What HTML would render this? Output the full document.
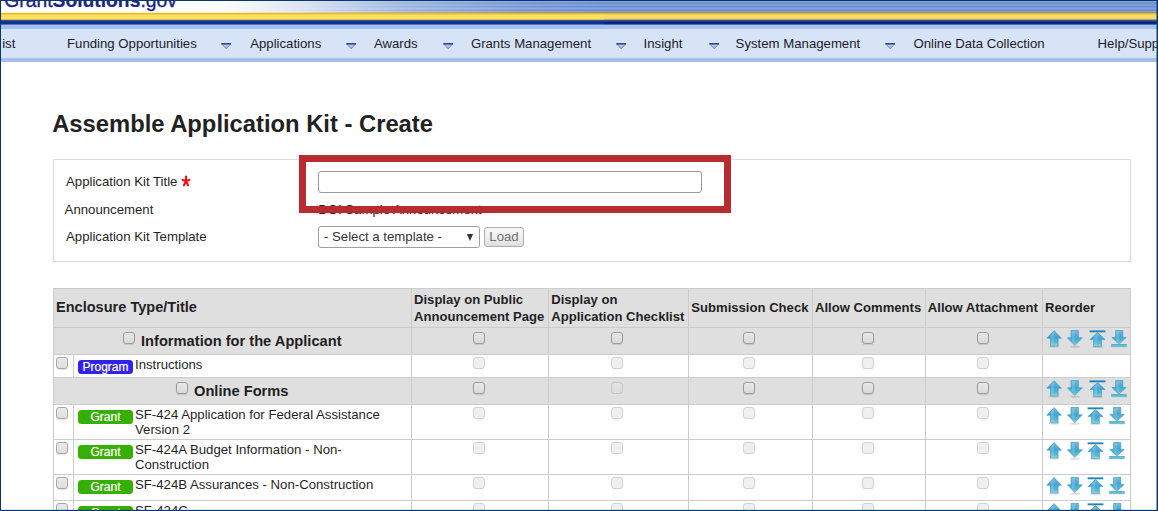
<!DOCTYPE html>
<html lang="en">
<head>
<meta charset="utf-8">
<title>Assemble Application Kit - Create</title>
<style>
*{box-sizing:border-box;margin:0;padding:0}
html,body{width:1158px;height:511px;overflow:hidden;background:#fff}
body{font-family:"Liberation Sans",Arial,sans-serif;font-size:13.2px;color:#1f1f24;position:relative}
.abs{position:absolute}
#page{position:absolute;left:0;top:0;width:1158px;height:511px;overflow:hidden;background:#fff}
/* header */
#hdr{position:absolute;left:0;top:0;width:1158px;height:29px;
 background:linear-gradient(to bottom,#063869 0px,#063869 1px,#7f9fde 1px,#7f9fde 2px,#7494d3 2px,#7494d3 3px,#6f8fce 3px,#6f8fce 4px,#7c9cdb 4px,#7c9cdb 5px,#7e9edd 5px,#7e9edd 6px,#6d8dcc 6px,#6d8dcc 7px,#7998d7 7px,#7998d7 8px,#86a4e2 8px,#86a4e2 9px,#7696d5 9px,#7696d5 10px,#6888c8 10px,#6888c8 11px,#8fa6cb 11px,#8fa6cb 12px,#93926a 12px,#93926a 13px,#d6b84c 13px,#d6b84c 14px,#f0cc50 14px,#f0cc50 15px,#fddc5c 15px,#fddc5c 16px,#fddc5c 16px,#fddc5c 17px,#f2d67e 17px,#f2d67e 18px,#f2d67e 18px,#f2d67e 19px,#b6a666 19px,#b6a666 20px,#46566f 20px,#46566f 21px,#12398a 21px,#12398a 22px,#0a2682 22px,#0a2682 23px,#0a2682 23px,#0a2682 24px,#4a6cc8 24px,#4a6cc8 25px,#a8c2ea 25px,#a8c2ea 26px,#a8c2ea 26px,#a8c2ea 27px,#a8c2ea 27px,#a8c2ea 28px,#a8c2ea 28px,#a8c2ea 29px)}
#hdrL{position:absolute;left:0;top:0;width:604px;height:29px;
 background:linear-gradient(to bottom,
 #063869 0,#063869 1px,
 rgba(255,255,255,0) 1px,rgba(255,255,255,0) 13px,
 #e6ba3a 13px,#e6ba3a 14px,#f2cc48 14px,#f2cc48 15px,
 #fee264 15px,#fee264 19px,#d6b650 19px,#d6b650 20px,
 #4e5a62 20px,#4e5a62 21px,#0c3498 21px,#0c3498 24px,
 #4f74d0 24px,#4f74d0 25px,#a5c0ea 25px,#a5c0ea 29px)}
#hdrW{position:absolute;left:1px;top:1px;width:603px;height:11px;
 background:linear-gradient(to right,#fff 0,#fff 215px,rgba(255,255,255,.75) 300px,rgba(255,255,255,.35) 400px,rgba(255,255,255,.08) 520px,rgba(255,255,255,0) 603px)}
#hdrY{position:absolute;left:1px;top:12px;width:603px;height:1px;background:linear-gradient(to right,#fff0b0 0,#fff0b0 215px,rgba(255,240,176,.75) 300px,rgba(255,240,176,.35) 400px,rgba(255,240,176,.08) 520px,rgba(255,240,176,0) 603px)}
#logo{position:absolute;left:4.3px;top:-9.7px;font-size:19.3px;line-height:22px;color:#1c2587;white-space:nowrap;letter-spacing:0}
#logo{-webkit-text-stroke:.35px #1c2587}
#logo b{font-weight:bold;-webkit-text-stroke:.2px #1c2587}
/* nav */
#nav{position:absolute;left:0;top:29px;width:1158px;height:33px;background:#d7e3f6;border-bottom:4px solid #a6c0ea}
.ni{position:absolute;top:36.1px;line-height:16px;font-size:13.2px;white-space:nowrap;color:#1c1c2c}
.na{position:absolute;top:42.6px;width:10.4px;height:6.4px}
/* frame */
#fT{position:absolute;left:0;top:0;width:1158px;height:1px;background:#063869}
#fL{position:absolute;left:0;top:0;width:1px;height:511px;background:#07366b}
#fR{position:absolute;left:1156px;top:0;width:2px;height:511px;background:linear-gradient(to right,rgba(7,54,107,.45) 0,rgba(7,54,107,.45) 1px,#07366b 1px,#07366b 2px)}
#fB{position:absolute;left:0;top:509px;width:1158px;height:2px;background:linear-gradient(to bottom,rgba(7,54,107,.12) 0,rgba(7,54,107,.12) 1px,#07366b 1px,#07366b 2px)}
h1{position:absolute;left:52.2px;top:110.2px;font-size:23.78px;line-height:28px;font-weight:bold;color:#222;white-space:nowrap}
#panel{position:absolute;left:53px;top:159px;width:1078px;height:103px;border:1px solid #ddd}
.lbl{position:absolute;line-height:16px;white-space:nowrap}
#red{position:absolute;left:299px;top:155px;width:432px;height:58px;border:7px solid #b72b31}
#inp{position:absolute;left:318px;top:171px;width:384px;height:22px;border:1px solid #9a9a9a;border-radius:3px;background:#fff}
#sel{position:absolute;left:318px;top:226px;width:162px;height:22px;border:1px solid #a0a0a0;border-radius:3px;background:#fff}
#sel span{position:absolute;left:5px;top:2px;line-height:16px;color:#333}
#sel i{position:absolute;left:147.5px;top:7px;width:0;height:0;border-left:3.5px solid transparent;border-right:3.5px solid transparent;border-top:7px solid #333}
#btn{position:absolute;left:484px;top:227px;width:40px;height:20px;border:1px solid #adadad;border-radius:3px;background:linear-gradient(#f7f7f7,#f0f0f0 50%,#dedede);color:#707070;text-align:center;line-height:18px;font-size:13.2px}
/* table */
.row{position:absolute;left:53px;width:1078px;border-top:1px solid #ccc}
.g{background:#dfdfdf}
.w{background:#fff}
.v{position:absolute;top:0;bottom:0;width:1px;background:#ccc}
.th{position:absolute;font-weight:bold;font-size:13.1px;line-height:17px;white-space:nowrap;color:#1f1f24}
.sec{position:absolute;font-weight:bold;font-size:14.67px;line-height:18px;white-space:nowrap;color:#1f1f24}
.cb{position:absolute;width:12px;height:12px;border:1px solid #9c9c9c;border-radius:3px;background:linear-gradient(#e8e8e8,#dadada);box-shadow:0 1px 1px rgba(0,0,0,.12)}
.cb.d{border-color:#d2d2d2;background:#efefef;box-shadow:none}
.cb.f{border-color:#a8a8a8;background:linear-gradient(#e9e9e9,#dedede)}
.cb.dg{border-color:#c5c5c5;background:linear-gradient(#e2e2e2,#dcdcdc);box-shadow:none}
.bd{position:absolute;left:25px;width:55px;height:14px;border-radius:3.5px;text-shadow:0 0 1px rgba(255,255,255,.55);color:#fff;font-size:12px;line-height:14px;text-align:center}
.bd.gr{background:#36b000}
.bd.pr{background:#2f22ee}
.tx{position:absolute;left:82px;line-height:15px;white-space:nowrap}
.ic{position:absolute;width:17px;height:18px}
</style>
</head>
<body>
<div id="page">
<div id="hdr"></div>
<div id="hdrL"></div>
<div id="hdrW"></div>
<div id="hdrY"></div>
<div id="logo">Grant<b>Solutions</b>.gov</div>
<div id="nav"></div>
<div class="ni" style="left:2.2px">ist</div>
<div class="ni" style="left:67px">Funding Opportunities</div>
<div class="ni" style="left:250.2px">Applications</div>
<div class="ni" style="left:373.9px">Awards</div>
<div class="ni" style="left:470.9px">Grants Management</div>
<div class="ni" style="left:643.6px">Insight</div>
<div class="ni" style="left:735.6px">System Management</div>
<div class="ni" style="left:913.4px">Online Data Collection</div>
<div class="ni" style="left:1097.6px">Help/Support</div>
<svg class="na" style="left:220.5px" viewBox="0 0 11 7" preserveAspectRatio="none"><path d="M0.8 1 L10.2 1 L5.5 6.4 Z" fill="url(#gn)" stroke="#4a68c2" stroke-width=".7" stroke-linejoin="round"/><path d="M0.3 0.9 L10.7 0.9" stroke="#1f3f90" stroke-width="1.5"/></svg>
<svg class="na" style="left:346.3px" viewBox="0 0 11 7" preserveAspectRatio="none"><path d="M0.8 1 L10.2 1 L5.5 6.4 Z" fill="url(#gn)" stroke="#4a68c2" stroke-width=".7" stroke-linejoin="round"/><path d="M0.3 0.9 L10.7 0.9" stroke="#1f3f90" stroke-width="1.5"/></svg>
<svg class="na" style="left:442.8px" viewBox="0 0 11 7" preserveAspectRatio="none"><path d="M0.8 1 L10.2 1 L5.5 6.4 Z" fill="url(#gn)" stroke="#4a68c2" stroke-width=".7" stroke-linejoin="round"/><path d="M0.3 0.9 L10.7 0.9" stroke="#1f3f90" stroke-width="1.5"/></svg>
<svg class="na" style="left:615.8px" viewBox="0 0 11 7" preserveAspectRatio="none"><path d="M0.8 1 L10.2 1 L5.5 6.4 Z" fill="url(#gn)" stroke="#4a68c2" stroke-width=".7" stroke-linejoin="round"/><path d="M0.3 0.9 L10.7 0.9" stroke="#1f3f90" stroke-width="1.5"/></svg>
<svg class="na" style="left:708.6px" viewBox="0 0 11 7" preserveAspectRatio="none"><path d="M0.8 1 L10.2 1 L5.5 6.4 Z" fill="url(#gn)" stroke="#4a68c2" stroke-width=".7" stroke-linejoin="round"/><path d="M0.3 0.9 L10.7 0.9" stroke="#1f3f90" stroke-width="1.5"/></svg>
<svg class="na" style="left:884.9px" viewBox="0 0 11 7" preserveAspectRatio="none"><path d="M0.8 1 L10.2 1 L5.5 6.4 Z" fill="url(#gn)" stroke="#4a68c2" stroke-width=".7" stroke-linejoin="round"/><path d="M0.3 0.9 L10.7 0.9" stroke="#1f3f90" stroke-width="1.5"/></svg>
<h1>Assemble Application Kit - Create</h1>
<div id="panel"></div>
<div class="lbl" style="left:66px;top:174.1px">Application Kit Title</div>
<svg class="abs" style="left:180px;top:174px;width:12px;height:14px" viewBox="0 0 12 14"><g stroke="#fb0d12" stroke-width="2.1" stroke-linecap="round" fill="none"><path d="M6 7 L6 2.6"/><path d="M6 7 L2.6 5.9"/><path d="M6 7 L9.4 5.9"/><path d="M6 7 L3.9 11.4"/><path d="M6 7 L8.1 11.4"/></g></svg>
<div class="lbl" style="left:64.6px;top:202.3px">Announcement</div>
<div class="lbl" style="left:66px;top:228.5px">Application Kit Template</div>
<div class="lbl" style="left:318.2px;top:201.8px">DOI Sample Announcement</div>
<div id="red"></div>
<div id="inp"></div>
<div id="sel"><span>- Select a template -</span><i></i></div>
<div id="btn">Load</div>
<svg width="0" height="0" style="position:absolute"><defs><linearGradient id="ga" x1="0" y1="0" x2="0" y2="1"><stop offset="0" stop-color="#72bcdf"/><stop offset=".45" stop-color="#43a5d2"/><stop offset=".8" stop-color="#5ab9d7"/><stop offset="1" stop-color="#93dde0"/></linearGradient><linearGradient id="gb" x1="0" y1="0" x2="0" y2="1"><stop offset="0" stop-color="#3fa6cc"/><stop offset="1" stop-color="#86d8dc"/></linearGradient><linearGradient id="gn" x1="0" y1="0" x2="0" y2="1"><stop offset="0" stop-color="#c9d1eb"/><stop offset="1" stop-color="#9ea6d0"/></linearGradient></defs></svg>
<div class="row g" style="top:288px;height:39px"><div class="v" style="left:0px"></div><div class="v" style="left:358px"></div><div class="v" style="left:495px"></div><div class="v" style="left:635px"></div><div class="v" style="left:759px"></div><div class="v" style="left:872px"></div><div class="v" style="left:989px"></div><div class="v" style="left:1077px"></div><div class="th" style="left:3px;top:9px;font-size:14.55px;line-height:18px">Enclosure Type/Title</div><div class="th" style="left:361px;top:1.6px">Display on Public<br>Announcement Page</div><div class="th" style="left:498.20000000000005px;top:1.6px">Display on<br>Application Checklist</div><div class="th" style="left:638.3px;top:10.1px">Submission Check</div><div class="th" style="left:762px;top:10.1px">Allow Comments</div><div class="th" style="left:874.8px;top:10.1px">Allow Attachment</div><div class="th" style="left:992px;top:10.1px">Reorder</div></div>
<div class="row g" style="top:327px;height:27px"><div class="v" style="left:0px"></div><div class="v" style="left:358px"></div><div class="v" style="left:495px"></div><div class="v" style="left:635px"></div><div class="v" style="left:759px"></div><div class="v" style="left:872px"></div><div class="v" style="left:989px"></div><div class="v" style="left:1077px"></div><div class="cb" style="left:69.5px;top:4px"></div><div class="sec" style="left:88px;top:4px">Information for the Applicant</div><div class="cb" style="left:420px;top:4px"></div><div class="cb" style="left:558px;top:4px"></div><div class="cb" style="left:690px;top:4px"></div><div class="cb" style="left:809px;top:4px"></div><div class="cb" style="left:924px;top:4px"></div><svg class="ic" style="left:992.5px;top:1.9px" viewBox="0 0 17 18"><ellipse cx="8" cy="16.6" rx="5.5" ry="1.1" fill="#000" opacity=".13"/><path d="M8.1 0.6 L15.4 8.2 L12.1 8.2 L12.1 16 L4.5 16 L4.5 8.2 L0.8 8.2 Z" fill="url(#ga)" stroke="#3893bf" stroke-width=".6" stroke-linejoin="round"/><path d="M8 1.8 L5 5.2 L5.4 14.5 L7.6 14.5 Z" fill="#fff" opacity=".16"/></svg><svg class="ic" style="left:1014.0px;top:1.9px" viewBox="0 0 17 18"><ellipse cx="8" cy="16.8" rx="5" ry="1" fill="#000" opacity=".13"/><path d="M4 0.5 L11.4 0.5 L11.4 7.8 L15.3 7.8 L7.8 15.6 L0.4 7.8 L4 7.8 Z" fill="url(#ga)" stroke="#3893bf" stroke-width=".6" stroke-linejoin="round"/><path d="M4.6 1.2 L7.6 1.2 L7.4 13.5 L4.8 10 Z" fill="#fff" opacity=".16"/></svg><svg class="ic" style="left:1035.6px;top:1.9px" viewBox="0 0 17 18"><ellipse cx="8.5" cy="17" rx="5.5" ry="1" fill="#000" opacity=".13"/><rect x="0.6" y="0.4" width="15.8" height="1.9" fill="#2285b4"/><path d="M8.5 2.6 L16.1 9.6 L12.4 9.6 L12.4 16.4 L4.6 16.4 L4.6 9.6 L0.9 9.6 Z" fill="url(#ga)" stroke="#3893bf" stroke-width=".6" stroke-linejoin="round"/><path d="M8.5 3.8 L5.2 7 L5.4 15 L7.8 15 Z" fill="#fff" opacity=".16"/></svg><svg class="ic" style="left:1057.5px;top:1.9px" viewBox="0 0 17 18"><path d="M4.6 0.5 L11.8 0.5 L11.8 7.4 L15.2 7.4 L8 14.2 L0.8 7.4 L4.6 7.4 Z" fill="url(#ga)" stroke="#3893bf" stroke-width=".6" stroke-linejoin="round"/><path d="M5.2 1.2 L8 1.2 L7.8 12 L5.4 9.5 Z" fill="#fff" opacity=".16"/><rect x="0.7" y="14.3" width="14.6" height="2.6" fill="url(#gb)" stroke="#3a9cc4" stroke-width=".4"/></svg></div>
<div class="row w" style="top:354px;height:23px"><div class="v" style="left:0px"></div><div class="v" style="left:20px"></div><div class="v" style="left:358px"></div><div class="v" style="left:495px"></div><div class="v" style="left:635px"></div><div class="v" style="left:759px"></div><div class="v" style="left:872px"></div><div class="v" style="left:989px"></div><div class="v" style="left:1077px"></div><div class="cb f" style="left:3px;top:2px"></div><div class="bd pr" style="top:4.5px">Program</div><div class="tx" style="top:1.5px">Instructions</div><div class="cb d" style="left:420px;top:2px"></div><div class="cb d" style="left:558px;top:2px"></div><div class="cb d" style="left:690px;top:2px"></div><div class="cb d" style="left:809px;top:2px"></div><div class="cb d" style="left:924px;top:2px"></div></div>
<div class="row g" style="top:377px;height:27px"><div class="v" style="left:0px"></div><div class="v" style="left:358px"></div><div class="v" style="left:495px"></div><div class="v" style="left:635px"></div><div class="v" style="left:759px"></div><div class="v" style="left:872px"></div><div class="v" style="left:989px"></div><div class="v" style="left:1077px"></div><div class="cb" style="left:123px;top:4px"></div><div class="sec" style="left:141px;top:4px">Online Forms</div><div class="cb" style="left:420px;top:4px"></div><div class="cb dg" style="left:558px;top:4px"></div><div class="cb" style="left:690px;top:4px"></div><div class="cb" style="left:809px;top:4px"></div><div class="cb" style="left:924px;top:4px"></div><svg class="ic" style="left:992.5px;top:1.9px" viewBox="0 0 17 18"><ellipse cx="8" cy="16.6" rx="5.5" ry="1.1" fill="#000" opacity=".13"/><path d="M8.1 0.6 L15.4 8.2 L12.1 8.2 L12.1 16 L4.5 16 L4.5 8.2 L0.8 8.2 Z" fill="url(#ga)" stroke="#3893bf" stroke-width=".6" stroke-linejoin="round"/><path d="M8 1.8 L5 5.2 L5.4 14.5 L7.6 14.5 Z" fill="#fff" opacity=".16"/></svg><svg class="ic" style="left:1014.0px;top:1.9px" viewBox="0 0 17 18"><ellipse cx="8" cy="16.8" rx="5" ry="1" fill="#000" opacity=".13"/><path d="M4 0.5 L11.4 0.5 L11.4 7.8 L15.3 7.8 L7.8 15.6 L0.4 7.8 L4 7.8 Z" fill="url(#ga)" stroke="#3893bf" stroke-width=".6" stroke-linejoin="round"/><path d="M4.6 1.2 L7.6 1.2 L7.4 13.5 L4.8 10 Z" fill="#fff" opacity=".16"/></svg><svg class="ic" style="left:1035.6px;top:1.9px" viewBox="0 0 17 18"><ellipse cx="8.5" cy="17" rx="5.5" ry="1" fill="#000" opacity=".13"/><rect x="0.6" y="0.4" width="15.8" height="1.9" fill="#2285b4"/><path d="M8.5 2.6 L16.1 9.6 L12.4 9.6 L12.4 16.4 L4.6 16.4 L4.6 9.6 L0.9 9.6 Z" fill="url(#ga)" stroke="#3893bf" stroke-width=".6" stroke-linejoin="round"/><path d="M8.5 3.8 L5.2 7 L5.4 15 L7.8 15 Z" fill="#fff" opacity=".16"/></svg><svg class="ic" style="left:1057.5px;top:1.9px" viewBox="0 0 17 18"><path d="M4.6 0.5 L11.8 0.5 L11.8 7.4 L15.2 7.4 L8 14.2 L0.8 7.4 L4.6 7.4 Z" fill="url(#ga)" stroke="#3893bf" stroke-width=".6" stroke-linejoin="round"/><path d="M5.2 1.2 L8 1.2 L7.8 12 L5.4 9.5 Z" fill="#fff" opacity=".16"/><rect x="0.7" y="14.3" width="14.6" height="2.6" fill="url(#gb)" stroke="#3a9cc4" stroke-width=".4"/></svg></div>
<div class="row w" style="top:404px;height:35px"><div class="v" style="left:0px"></div><div class="v" style="left:20px"></div><div class="v" style="left:358px"></div><div class="v" style="left:495px"></div><div class="v" style="left:635px"></div><div class="v" style="left:759px"></div><div class="v" style="left:872px"></div><div class="v" style="left:989px"></div><div class="v" style="left:1077px"></div><div class="cb f" style="left:3px;top:2px"></div><div class="bd gr" style="top:4.5px">Grant</div><div class="tx" style="top:1.5px">SF-424 Application for Federal Assistance<br>Version 2</div><div class="cb d" style="left:420px;top:2px"></div><div class="cb d" style="left:558px;top:2px"></div><div class="cb d" style="left:690px;top:2px"></div><div class="cb d" style="left:809px;top:2px"></div><div class="cb d" style="left:924px;top:2px"></div><svg class="ic" style="left:992.5px;top:2.0px" viewBox="0 0 17 18"><ellipse cx="8" cy="16.6" rx="5.5" ry="1.1" fill="#000" opacity=".13"/><path d="M8.1 0.6 L15.4 8.2 L12.1 8.2 L12.1 16 L4.5 16 L4.5 8.2 L0.8 8.2 Z" fill="url(#ga)" stroke="#3893bf" stroke-width=".6" stroke-linejoin="round"/><path d="M8 1.8 L5 5.2 L5.4 14.5 L7.6 14.5 Z" fill="#fff" opacity=".16"/></svg><svg class="ic" style="left:1014.0px;top:2.0px" viewBox="0 0 17 18"><ellipse cx="8" cy="16.8" rx="5" ry="1" fill="#000" opacity=".13"/><path d="M4 0.5 L11.4 0.5 L11.4 7.8 L15.3 7.8 L7.8 15.6 L0.4 7.8 L4 7.8 Z" fill="url(#ga)" stroke="#3893bf" stroke-width=".6" stroke-linejoin="round"/><path d="M4.6 1.2 L7.6 1.2 L7.4 13.5 L4.8 10 Z" fill="#fff" opacity=".16"/></svg><svg class="ic" style="left:1034.3px;top:2.0px" viewBox="0 0 17 18"><ellipse cx="8.5" cy="17" rx="5.5" ry="1" fill="#000" opacity=".13"/><rect x="0.6" y="0.4" width="15.8" height="1.9" fill="#2285b4"/><path d="M8.5 2.6 L16.1 9.6 L12.4 9.6 L12.4 16.4 L4.6 16.4 L4.6 9.6 L0.9 9.6 Z" fill="url(#ga)" stroke="#3893bf" stroke-width=".6" stroke-linejoin="round"/><path d="M8.5 3.8 L5.2 7 L5.4 15 L7.8 15 Z" fill="#fff" opacity=".16"/></svg><svg class="ic" style="left:1055.5px;top:2.0px" viewBox="0 0 17 18"><path d="M4.6 0.5 L11.8 0.5 L11.8 7.4 L15.2 7.4 L8 14.2 L0.8 7.4 L4.6 7.4 Z" fill="url(#ga)" stroke="#3893bf" stroke-width=".6" stroke-linejoin="round"/><path d="M5.2 1.2 L8 1.2 L7.8 12 L5.4 9.5 Z" fill="#fff" opacity=".16"/><rect x="0.7" y="14.3" width="14.6" height="2.6" fill="url(#gb)" stroke="#3a9cc4" stroke-width=".4"/></svg></div>
<div class="row w" style="top:439px;height:35px"><div class="v" style="left:0px"></div><div class="v" style="left:20px"></div><div class="v" style="left:358px"></div><div class="v" style="left:495px"></div><div class="v" style="left:635px"></div><div class="v" style="left:759px"></div><div class="v" style="left:872px"></div><div class="v" style="left:989px"></div><div class="v" style="left:1077px"></div><div class="cb f" style="left:3px;top:2px"></div><div class="bd gr" style="top:4.5px">Grant</div><div class="tx" style="top:1.5px">SF-424A Budget Information - Non-<br>Construction</div><div class="cb d" style="left:420px;top:2px"></div><div class="cb d" style="left:558px;top:2px"></div><div class="cb d" style="left:690px;top:2px"></div><div class="cb d" style="left:809px;top:2px"></div><div class="cb d" style="left:924px;top:2px"></div><svg class="ic" style="left:992.5px;top:2.0px" viewBox="0 0 17 18"><ellipse cx="8" cy="16.6" rx="5.5" ry="1.1" fill="#000" opacity=".13"/><path d="M8.1 0.6 L15.4 8.2 L12.1 8.2 L12.1 16 L4.5 16 L4.5 8.2 L0.8 8.2 Z" fill="url(#ga)" stroke="#3893bf" stroke-width=".6" stroke-linejoin="round"/><path d="M8 1.8 L5 5.2 L5.4 14.5 L7.6 14.5 Z" fill="#fff" opacity=".16"/></svg><svg class="ic" style="left:1014.0px;top:2.0px" viewBox="0 0 17 18"><ellipse cx="8" cy="16.8" rx="5" ry="1" fill="#000" opacity=".13"/><path d="M4 0.5 L11.4 0.5 L11.4 7.8 L15.3 7.8 L7.8 15.6 L0.4 7.8 L4 7.8 Z" fill="url(#ga)" stroke="#3893bf" stroke-width=".6" stroke-linejoin="round"/><path d="M4.6 1.2 L7.6 1.2 L7.4 13.5 L4.8 10 Z" fill="#fff" opacity=".16"/></svg><svg class="ic" style="left:1034.3px;top:2.0px" viewBox="0 0 17 18"><ellipse cx="8.5" cy="17" rx="5.5" ry="1" fill="#000" opacity=".13"/><rect x="0.6" y="0.4" width="15.8" height="1.9" fill="#2285b4"/><path d="M8.5 2.6 L16.1 9.6 L12.4 9.6 L12.4 16.4 L4.6 16.4 L4.6 9.6 L0.9 9.6 Z" fill="url(#ga)" stroke="#3893bf" stroke-width=".6" stroke-linejoin="round"/><path d="M8.5 3.8 L5.2 7 L5.4 15 L7.8 15 Z" fill="#fff" opacity=".16"/></svg><svg class="ic" style="left:1055.5px;top:2.0px" viewBox="0 0 17 18"><path d="M4.6 0.5 L11.8 0.5 L11.8 7.4 L15.2 7.4 L8 14.2 L0.8 7.4 L4.6 7.4 Z" fill="url(#ga)" stroke="#3893bf" stroke-width=".6" stroke-linejoin="round"/><path d="M5.2 1.2 L8 1.2 L7.8 12 L5.4 9.5 Z" fill="#fff" opacity=".16"/><rect x="0.7" y="14.3" width="14.6" height="2.6" fill="url(#gb)" stroke="#3a9cc4" stroke-width=".4"/></svg></div>
<div class="row w" style="top:474px;height:26px"><div class="v" style="left:0px"></div><div class="v" style="left:20px"></div><div class="v" style="left:358px"></div><div class="v" style="left:495px"></div><div class="v" style="left:635px"></div><div class="v" style="left:759px"></div><div class="v" style="left:872px"></div><div class="v" style="left:989px"></div><div class="v" style="left:1077px"></div><div class="cb f" style="left:3px;top:2px"></div><div class="bd gr" style="top:4.5px">Grant</div><div class="tx" style="top:1.5px">SF-424B Assurances - Non-Construction</div><div class="cb d" style="left:420px;top:2px"></div><div class="cb d" style="left:558px;top:2px"></div><div class="cb d" style="left:690px;top:2px"></div><div class="cb d" style="left:809px;top:2px"></div><div class="cb d" style="left:924px;top:2px"></div><svg class="ic" style="left:992.5px;top:2.0px" viewBox="0 0 17 18"><ellipse cx="8" cy="16.6" rx="5.5" ry="1.1" fill="#000" opacity=".13"/><path d="M8.1 0.6 L15.4 8.2 L12.1 8.2 L12.1 16 L4.5 16 L4.5 8.2 L0.8 8.2 Z" fill="url(#ga)" stroke="#3893bf" stroke-width=".6" stroke-linejoin="round"/><path d="M8 1.8 L5 5.2 L5.4 14.5 L7.6 14.5 Z" fill="#fff" opacity=".16"/></svg><svg class="ic" style="left:1014.0px;top:2.0px" viewBox="0 0 17 18"><ellipse cx="8" cy="16.8" rx="5" ry="1" fill="#000" opacity=".13"/><path d="M4 0.5 L11.4 0.5 L11.4 7.8 L15.3 7.8 L7.8 15.6 L0.4 7.8 L4 7.8 Z" fill="url(#ga)" stroke="#3893bf" stroke-width=".6" stroke-linejoin="round"/><path d="M4.6 1.2 L7.6 1.2 L7.4 13.5 L4.8 10 Z" fill="#fff" opacity=".16"/></svg><svg class="ic" style="left:1034.3px;top:2.0px" viewBox="0 0 17 18"><ellipse cx="8.5" cy="17" rx="5.5" ry="1" fill="#000" opacity=".13"/><rect x="0.6" y="0.4" width="15.8" height="1.9" fill="#2285b4"/><path d="M8.5 2.6 L16.1 9.6 L12.4 9.6 L12.4 16.4 L4.6 16.4 L4.6 9.6 L0.9 9.6 Z" fill="url(#ga)" stroke="#3893bf" stroke-width=".6" stroke-linejoin="round"/><path d="M8.5 3.8 L5.2 7 L5.4 15 L7.8 15 Z" fill="#fff" opacity=".16"/></svg><svg class="ic" style="left:1055.5px;top:2.0px" viewBox="0 0 17 18"><path d="M4.6 0.5 L11.8 0.5 L11.8 7.4 L15.2 7.4 L8 14.2 L0.8 7.4 L4.6 7.4 Z" fill="url(#ga)" stroke="#3893bf" stroke-width=".6" stroke-linejoin="round"/><path d="M5.2 1.2 L8 1.2 L7.8 12 L5.4 9.5 Z" fill="#fff" opacity=".16"/><rect x="0.7" y="14.3" width="14.6" height="2.6" fill="url(#gb)" stroke="#3a9cc4" stroke-width=".4"/></svg></div>
<div class="row w" style="top:500px;height:27px"><div class="v" style="left:0px"></div><div class="v" style="left:20px"></div><div class="v" style="left:358px"></div><div class="v" style="left:495px"></div><div class="v" style="left:635px"></div><div class="v" style="left:759px"></div><div class="v" style="left:872px"></div><div class="v" style="left:989px"></div><div class="v" style="left:1077px"></div><div class="cb f" style="left:3px;top:2px"></div><div class="bd gr" style="top:4.5px">Grant</div><div class="tx" style="top:1.5px">SF-424C</div><div class="cb d" style="left:420px;top:2px"></div><div class="cb d" style="left:558px;top:2px"></div><div class="cb d" style="left:690px;top:2px"></div><div class="cb d" style="left:809px;top:2px"></div><div class="cb d" style="left:924px;top:2px"></div><svg class="ic" style="left:992.5px;top:2.0px" viewBox="0 0 17 18"><ellipse cx="8" cy="16.6" rx="5.5" ry="1.1" fill="#000" opacity=".13"/><path d="M8.1 0.6 L15.4 8.2 L12.1 8.2 L12.1 16 L4.5 16 L4.5 8.2 L0.8 8.2 Z" fill="url(#ga)" stroke="#3893bf" stroke-width=".6" stroke-linejoin="round"/><path d="M8 1.8 L5 5.2 L5.4 14.5 L7.6 14.5 Z" fill="#fff" opacity=".16"/></svg><svg class="ic" style="left:1014.0px;top:2.0px" viewBox="0 0 17 18"><ellipse cx="8" cy="16.8" rx="5" ry="1" fill="#000" opacity=".13"/><path d="M4 0.5 L11.4 0.5 L11.4 7.8 L15.3 7.8 L7.8 15.6 L0.4 7.8 L4 7.8 Z" fill="url(#ga)" stroke="#3893bf" stroke-width=".6" stroke-linejoin="round"/><path d="M4.6 1.2 L7.6 1.2 L7.4 13.5 L4.8 10 Z" fill="#fff" opacity=".16"/></svg><svg class="ic" style="left:1034.3px;top:2.0px" viewBox="0 0 17 18"><ellipse cx="8.5" cy="17" rx="5.5" ry="1" fill="#000" opacity=".13"/><rect x="0.6" y="0.4" width="15.8" height="1.9" fill="#2285b4"/><path d="M8.5 2.6 L16.1 9.6 L12.4 9.6 L12.4 16.4 L4.6 16.4 L4.6 9.6 L0.9 9.6 Z" fill="url(#ga)" stroke="#3893bf" stroke-width=".6" stroke-linejoin="round"/><path d="M8.5 3.8 L5.2 7 L5.4 15 L7.8 15 Z" fill="#fff" opacity=".16"/></svg><svg class="ic" style="left:1055.5px;top:2.0px" viewBox="0 0 17 18"><path d="M4.6 0.5 L11.8 0.5 L11.8 7.4 L15.2 7.4 L8 14.2 L0.8 7.4 L4.6 7.4 Z" fill="url(#ga)" stroke="#3893bf" stroke-width=".6" stroke-linejoin="round"/><path d="M5.2 1.2 L8 1.2 L7.8 12 L5.4 9.5 Z" fill="#fff" opacity=".16"/><rect x="0.7" y="14.3" width="14.6" height="2.6" fill="url(#gb)" stroke="#3a9cc4" stroke-width=".4"/></svg></div>
<div id="fT"></div><div id="fL"></div><div id="fR"></div><div id="fB"></div>
</div>
</body>
</html>
